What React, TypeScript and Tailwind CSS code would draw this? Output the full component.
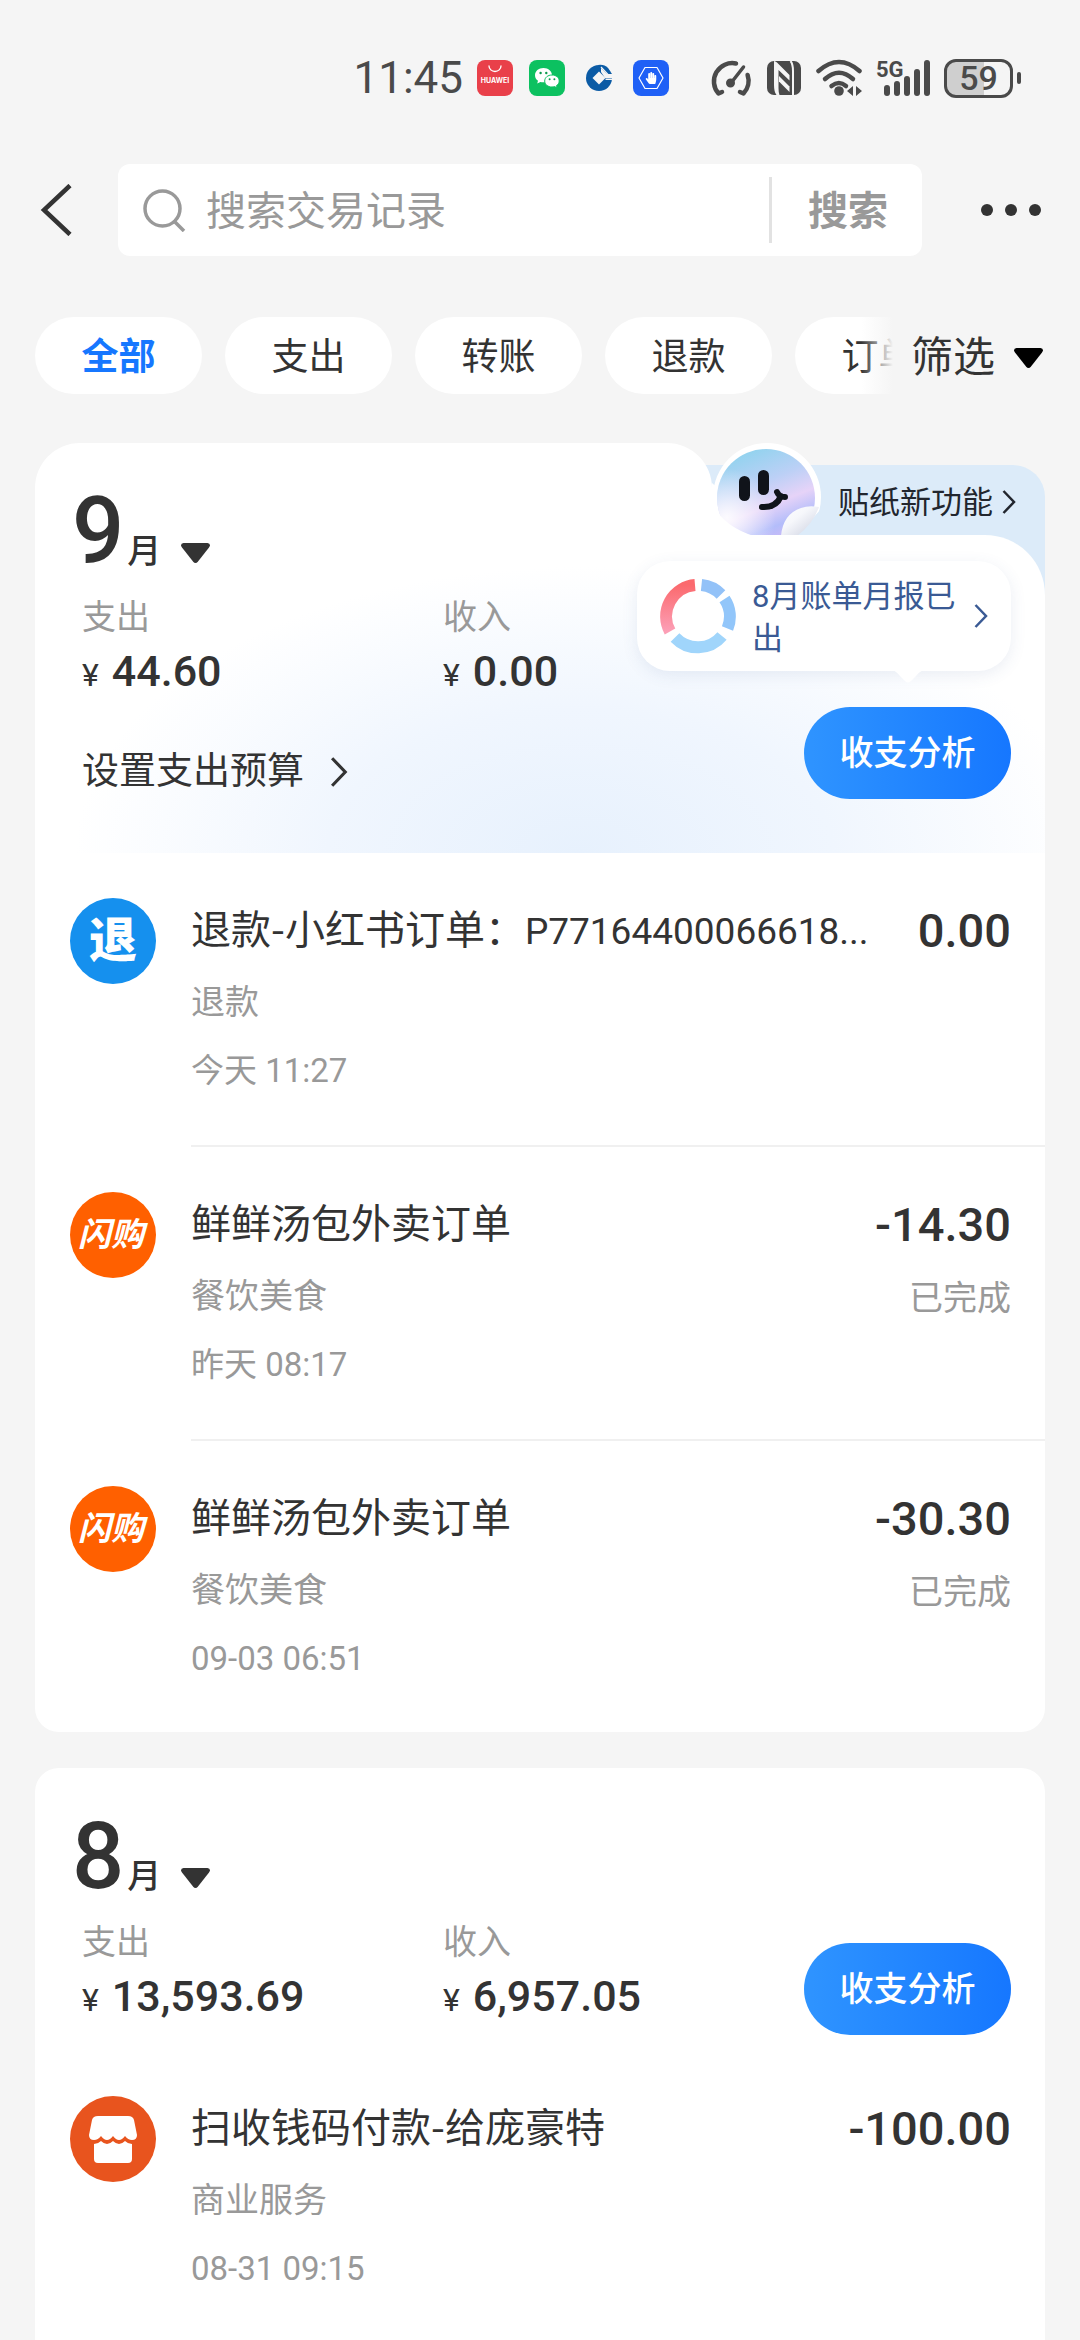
import React, { useState } from "react";
import { FaHandPaper } from "react-icons/fa";

type Transaction = {
  id: string;
  icon: "refund" | "flash" | "shop";
  title: string;
  code?: string;
  category: string;
  time: string;
  amount: string;
  status?: string;
};

const filters = ["全部", "支出", "转账", "退款", "订单"];

const september: Transaction[] = [
  {
    id: "s1",
    icon: "refund",
    title: "退款-小红书订单：",
    code: "P77164400066618...",
    category: "退款",
    time: "今天 11:27",
    amount: "0.00",
  },
  {
    id: "s2",
    icon: "flash",
    title: "鲜鲜汤包外卖订单",
    category: "餐饮美食",
    time: "昨天 08:17",
    amount: "-14.30",
    status: "已完成",
  },
  {
    id: "s3",
    icon: "flash",
    title: "鲜鲜汤包外卖订单",
    category: "餐饮美食",
    time: "09-03 06:51",
    amount: "-30.30",
    status: "已完成",
  },
];

const august: Transaction[] = [
  {
    id: "a1",
    icon: "shop",
    title: "扫收钱码付款-给庞豪特",
    category: "商业服务",
    time: "08-31 09:15",
    amount: "-100.00",
  },
];

const AppIcons = () => (
  <div className="flex gap-4">
    <svg className="size-9" viewBox="0 0 36 36">
      <rect width="36" height="36" rx="8" fill="#e9404a" />
      <path d="M12 6a6 5.500 0 0 0 12 0" fill="none" stroke="#fff" strokeWidth="1.300" strokeLinecap="round" />
      <text x="18" y="23" textAnchor="middle" fill="#fff" fontSize="7" fontWeight="700" fontFamily="Inter, sans-serif">
        HUAWEI
      </text>
    </svg>
    <svg className="size-9" viewBox="0 0 36 36">
      <rect width="36" height="36" rx="8" fill="#0cc160" />
      <path d="M14.500 8C9.500 8 6 11.200 6 15.200c0 2.300 1.200 4.200 3 5.500l-.8 2.800 3.200-1.600c1 .3 2 .4 3.100.4 5 0 8.500-3.200 8.500-7.100S19.500 8 14.500 8z" fill="#fff" />
      <path d="M23 15c-4.200 0-7.300 2.600-7.300 6s3.100 6 7.300 6c.9 0 1.800-.1 2.600-.4l2.600 1.400-.7-2.400c1.700-1.100 2.700-2.700 2.700-4.600 0-3.400-3-6-7.200-6z" fill="#fff" stroke="#0cc160" strokeWidth="1" />
      <g fill="#0a9a4c">
        <circle cx="11.600" cy="13" r="1.200" />
        <circle cx="17.300" cy="13" r="1.200" />
        <circle cx="20.600" cy="19.300" r="1" />
        <circle cx="25.400" cy="19.300" r="1" />
      </g>
    </svg>
    <svg className="size-9" viewBox="0 0 36 36">
      <circle cx="18" cy="18" r="13" fill="#0b5ba5" />
      <path d="M18 11.500l6.500 6.500-6.500 6.500-6.500-6.500z" fill="#f5f5f5" />
      <path d="M24 18h8v-4l-9-9-2-1 7 9h-3l-5-6v5z" fill="#f5f5f5" />
      <path d="M17 5q6-1 10 3l4 6h-5z" fill="#0b5ba5" />
      <path d="M20 7l7 7.500" stroke="#f5f5f5" strokeWidth="1.200" />
      <path d="M24.500 18.500h8l-1 1.500h-7z" fill="#f5f5f5" />
    </svg>
    <span className="relative grid size-9 place-items-center rounded-lg bg-[#1f60f6]">
      <svg className="absolute inset-0" viewBox="0 0 36 36">
        <path d="M12 7.500h12l6 10.500-6 10.500H12L6 18z" fill="none" stroke="#fff" strokeWidth="1.200" strokeLinejoin="round" />
      </svg>
      <FaHandPaper className="size-3 text-white" />
    </span>
  </div>
);

const StatusBar = () => (
  <div className="flex h-[106px] items-center justify-end gap-[14px] pt-[50px] pr-[59px] text-[#4a4a4a]">
    <span className="text-[44px] leading-[46px]">11:45</span>
    <AppIcons />
    <svg className="ml-[26px] h-10 w-[44px]" viewBox="0 0 44 40" fill="none" stroke="currentColor" strokeWidth="4.500" strokeLinecap="round">
      <path d="M27 5.500A18.300 18.300 0 0 0 9.500 35.500L13 34" strokeLinejoin="round" />
      <path d="M38.600 17A18.300 18.300 0 0 1 34.500 35.500L31 34" strokeLinejoin="round" />
      <path d="M22 25L34.500 9" strokeWidth="3.500" />
      <circle cx="21.500" cy="25" r="3" fill="currentColor" strokeWidth="3" />
    </svg>
    <svg className="h-[34px] w-[34px]" viewBox="0 0 34 34">
      <rect width="34" height="34" rx="7" fill="currentColor" />
      <path d="M7 0q1.500 0 3 1.500L22.500 14v5.500L11.500 9v18q0 5 1 7H9.500Q7 31 7 24z" fill="#f5f5f5" />
      <path d="M12 15l10.500 10.500V31L12 20.500z" fill="#f5f5f5" />
      <path d="M23.500 0q2.500 3 2.500 10v24" fill="none" stroke="#f5f5f5" strokeWidth="2" />
    </svg>
    <svg className="h-10 w-[47px]" viewBox="0 0 47 40" fill="none" stroke="currentColor" strokeWidth="4.500" strokeLinecap="round">
      <path d="M3.500 13Q24 -5 44.500 13" />
      <path d="M10 21Q24 8.500 38 21" />
      <path d="M16.500 28Q24 22 31 28" />
      <circle cx="24" cy="33" r="4.800" fill="currentColor" stroke="none" />
      <path d="M38 28v10l-6-5zM41 28v10l6-5z" fill="currentColor" stroke="none" />
    </svg>
    <svg className="h-10 w-[54px]" viewBox="0 0 54 40" fill="currentColor">
      <text x="0" y="19" fontSize="22" fontWeight="700" fontFamily="Roboto, sans-serif">
        5G
      </text>
      <rect x="8" y="27" width="6" height="11" rx="3" />
      <rect x="18" y="23" width="6" height="15" rx="3" />
      <rect x="28" y="18" width="6" height="20" rx="3" />
      <rect x="38" y="11" width="6" height="27" rx="3" />
      <rect x="48" y="2" width="6" height="36" rx="3" />
    </svg>
    <div className="flex items-center gap-1">
      <div className="flex h-[39px] w-[69px] items-center justify-center rounded-xl border-3 border-[#4a4a4a] bg-linear-to-r from-[#cfcfcf] from-59% to-[#f5f5f5] to-59% text-[34px] leading-none font-medium">
        59
      </div>
      <div className="h-3 w-1 rounded-full bg-[#4a4a4a]" />
    </div>
  </div>
);

const Header = () => (
  <header className="mt-[58px] flex items-center pr-[39px] pl-[40px]">
    <button aria-label="返回" className="mr-[46px]">
      <svg className="h-[52px] w-8" viewBox="0 0 32 52" fill="none" stroke="#333" strokeWidth="4.500">
        <path d="M30 1.500L4 26l26 24.500" />
      </svg>
    </button>
    <form className="flex h-[92px] min-w-0 flex-1 items-center rounded-xl bg-white pr-[34px] pl-[25px]">
      <svg className="mr-[20px] size-[43px] shrink-0" viewBox="0 0 43 43" fill="none" stroke="#999" strokeWidth="3.500">
        <circle cx="19.500" cy="19.500" r="17.500" />
        <path d="M32 33l9 9" />
      </svg>
      <input
        aria-label="搜索交易记录"
        placeholder="搜索交易记录"
        className="min-w-0 flex-1 bg-transparent pt-1 text-[40px] leading-[56px] outline-none placeholder:text-[#999]"
      />
      <div className="mr-[36px] h-[66px] w-[3px] bg-[#e2e2e2]" />
      <button type="button" className="pt-1 text-[40px] leading-[56px] font-bold text-[#999]">
        搜索
      </button>
    </form>
    <button aria-label="更多" className="ml-[59px] flex gap-3">
      <span className="size-3 rounded-full bg-[#333]" />
      <span className="size-3 rounded-full bg-[#333]" />
      <span className="size-3 rounded-full bg-[#333]" />
    </button>
  </header>
);

const Triangle = ({ className }: { className: string }) => (
  <svg className={className} viewBox="0 0 29 20">
    <path d="M2.500 0h24q4 1 1.500 4.500L17 18.500q-2.500 3-5 0L1 4.500Q-1.500 1 2.500 0z" fill="currentColor" />
  </svg>
);

const Chevron = ({ className }: { className: string }) => (
  <svg className={className} viewBox="0 0 14 24" fill="none" stroke="currentColor" strokeWidth="2.500">
    <path d="M1.500 1L12 12 1.500 23" />
  </svg>
);

const FilterBar = () => {
  const [active, setActive] = useState(filters[0]);

  return (
    <nav className="mt-[61px] flex items-center pr-[37px] pl-[35px]">
      <div className="relative flex min-w-0 flex-1 gap-[23px] overflow-hidden">
        {filters.map((text) => (
          <button
            key={text}
            onClick={() => setActive(text)}
            className={`h-[77px] w-[167px] shrink-0 rounded-full bg-white pt-1 text-[37px] leading-[48px] ${
              text === active ? "font-bold text-[#1677ff]" : "text-[#333]"
            }`}
          >
            {text}
          </button>
        ))}
        <div className="absolute inset-y-0 right-0 w-8 bg-linear-to-r from-[#f5f5f5]/0 to-[#f5f5f5]" />
      </div>
      <button className="ml-[18px] flex items-center gap-[19px] pt-1 text-[42px] leading-[56px] text-[#333]">
        筛选
        <Triangle className="h-5 w-[29px] text-black" />
      </button>
    </nav>
  );
};

const Sticker = () => (
  <svg className="absolute top-0 right-[224px] h-[93px] w-[109px]" viewBox="0 0 109 93">
    <defs>
      <linearGradient id="holo" x1="0.300" y1="0" x2="0.700" y2="1">
        <stop offset="0" stopColor="#8fd3ee" />
        <stop offset="0.350" stopColor="#bcd0f6" />
        <stop offset="0.580" stopColor="#e6d3f8" />
        <stop offset="0.780" stopColor="#b3bdfa" />
        <stop offset="1" stopColor="#d9b8f5" />
      </linearGradient>
      <radialGradient id="glow" cx="0.100" cy="0.700" r="0.500">
        <stop offset="0" stopColor="#fff" stopOpacity="0.900" />
        <stop offset="1" stopColor="#fff" stopOpacity="0" />
      </radialGradient>
      <linearGradient id="fold" x1="0" y1="0" x2="1" y2="1">
        <stop offset="0" stopColor="#fff" />
        <stop offset="0.400" stopColor="#f6f7fb" />
        <stop offset="1" stopColor="#c9cede" />
      </linearGradient>
    </defs>
    <path d="M0 40v53h60z" fill="#fff" />
    <circle cx="55" cy="54" r="54" fill="#fff" />
    <circle cx="54" cy="55" r="49" fill="url(#holo)" />
    <circle cx="54" cy="55" r="49" fill="url(#glow)" />
    <path d="M0 60q12 24 42 33H0z" fill="#fff" />
    <path d="M109 66q-14 16-26 27h26z" fill="#dcebf9" />
    <path d="M107 64q-10-2-18 1-18 6-20 28h16q16-12 22-29z" fill="url(#fold)" />
    <rect x="27" y="33" width="11" height="25" rx="5.500" fill="#10131a" />
    <rect x="46" y="27" width="11" height="25" rx="5.500" fill="#10131a" />
    <path d="M50 64q14 1 19-11M65 49q2 5 8 5" fill="none" stroke="#10131a" strokeWidth="6" strokeLinecap="round" />
  </svg>
);

// White tab on the left, blue banner peeking out from behind on the right
const StickerBanner = () => (
  <>
    <a
      href="#sticker"
      className="absolute top-[22px] right-0 flex h-[140px] w-[368px] items-start justify-end gap-[9px] rounded-tr-[32px] bg-[#dcebf9] pt-4 pr-[29px] text-[31px] leading-[44px] text-[#22262e]"
    >
      贴纸新功能
      <Chevron className="mt-[9px] h-6 w-[14px]" />
    </a>
    <div className="absolute top-0 right-[333px] left-0 h-[140px] rounded-t-[45px] bg-white" />
    <Sticker />
    <div className="absolute inset-x-0 top-[92px] bottom-0 rounded-tr-[60px] bg-white bg-[radial-gradient(ellipse_50%_90%_at_54%_100%,#e7f1fd_0%,#f0f6fe_50%,#ffffff_100%)]" />
  </>
);

const ReportBubble = () => (
  <a
    href="#report"
    className="absolute top-[118px] right-[34px] flex h-[110px] w-[374px] items-center rounded-[33px] bg-white pl-[23px] text-[#3a5a94] shadow-[0_4px_16px_rgba(60,90,150,0.1)]"
  >
    <svg className="mr-[16px] size-[76px]" viewBox="0 0 76 76" fill="none" strokeWidth="12">
      <defs>
        <linearGradient id="red" x1="0" y1="0" x2="0" y2="1">
          <stop offset="0" stopColor="#fb6a6e" />
          <stop offset="1" stopColor="#fc9fb6" />
        </linearGradient>
      </defs>
      <path d="M35 7A31.500 31.500 0 0 0 10 53.500" stroke="url(#red)" />
      <path d="M41.500 7A31.500 31.500 0 0 1 61 16.500" stroke="#93c2f8" />
      <path d="M64.500 21A31.500 31.500 0 0 1 67.500 50.500" stroke="#92c6fa" />
      <path d="M62 58A31.500 31.500 0 0 1 15 59.500" stroke="#a0d5fb" />
    </svg>
    <span className="w-[210px] pt-1 text-[31px] leading-[42px]">8月账单月报已出</span>
    <Chevron className="ml-3 h-6 w-[14px]" />
    <svg className="absolute top-[109px] right-[87px] h-[13px] w-8" viewBox="0 0 32 13">
      <path d="M0 0h32q-4 1-8 6l-5 5q-3 3-6 0L8 6Q4 1 0 0z" fill="#fff" />
    </svg>
  </a>
);

const MonthTitle = ({ month }: { month: string }) => (
  <button className="flex h-[92px] items-baseline pl-[37px] leading-[92px]">
    <span className="text-[92px] font-medium">{month}</span>
    <span className="ml-[3px] text-[34px] font-medium">月</span>
    <Triangle className="ml-5 h-5 w-[29px]" />
  </button>
);

const Stat = ({ label, value }: { label: string; value: string }) => (
  <div className="w-[361px]">
    <div className="text-[34px] leading-[40px] text-[#999]">{label}</div>
    <div className="mt-2 text-[43px] leading-[52px] font-medium">
      <span className="mr-[13px] text-[32px] leading-none font-normal">¥</span>
      {value}
    </div>
  </div>
);

const AnalysisButton = () => (
  <button className="h-[92px] w-[207px] shrink-0 rounded-full bg-linear-to-r from-[#2f94ff] to-[#1677ff] text-[34px] leading-[48px] font-medium text-white">
    收支分析
  </button>
);

const TransactionIcon = ({ icon }: { icon: Transaction["icon"] }) => {
  switch (icon) {
    case "refund":
      return (
        <span className="flex size-[86px] shrink-0 items-center justify-center rounded-full bg-[#1590ee] text-[48px] leading-[48px] font-black text-white">
          退
        </span>
      );
    case "flash":
      return (
        <span className="flex size-[86px] shrink-0 items-center justify-center rounded-full bg-[#ff6000] pr-1 text-[33px] leading-[40px] font-bold text-white italic">
          闪购
        </span>
      );
    case "shop":
      return (
        <svg className="size-[86px] shrink-0" viewBox="0 0 86 86">
          <circle cx="43" cy="43" r="43" fill="#e8541e" />
          <path
            d="M28 20h30q5 0 6 4l3 15q0 5-5 5-4 0-7-4-3 4-6 4t-6-4q-3 4-6 4t-6-4q-3 4-7 4-5 0-5-5l3-15q1-4 6-4z"
            fill="#fff"
          />
          <path d="M24 48q4 0 7-3 3 3 6 3t6-3q3 3 6 3t6-3q3 3 7 3v15q0 4-4 4H28q-4 0-4-4z" fill="#fff" />
        </svg>
      );
  }
};

const TransactionItem = ({
  icon,
  title,
  code,
  category,
  time,
  amount,
  status,
}: Transaction) => (
  <li className="group flex pl-[35px]">
    <div className="pt-[45px] pr-[35px]">
      <TransactionIcon icon={icon} />
    </div>
    <div className="flex h-[294px] min-w-0 flex-1 justify-between border-b-2 border-[#f0f0f0] pt-[50px] pr-[34px] group-last:h-[291px] group-last:border-b-0">
      <div className="whitespace-nowrap">
        <div className="font-['Noto_Sans_CJK_SC',sans-serif] text-[40px] leading-[48px]">
          {title}
          {code && <span className="font-[Roboto,sans-serif] text-[37px] leading-none">{code}</span>}
        </div>
        <div className="mt-[27px] text-[34px] leading-[48px] text-[#999]">{category}</div>
        <div className="mt-[21px] text-[33px] leading-[48px] text-[#999]">{time}</div>
      </div>
      <div className="text-right whitespace-nowrap">
        <div className="text-[47px] leading-[56px] font-medium">{amount}</div>
        {status && <div className="mt-[21px] text-[34px] leading-[48px] text-[#999]">{status}</div>}
      </div>
    </div>
  </li>
);

const TransactionList = ({ items }: { items: Transaction[] }) => (
  <ul>
    {items.map((item) => (
      <TransactionItem {...item} key={item.id} />
    ))}
  </ul>
);

const App = () => (
  <div className="flex h-screen flex-col overflow-hidden bg-[#f5f5f5] font-[Roboto,'Noto_Sans_CJK_SC',sans-serif] text-[#333]">
    <StatusBar />
    <Header />
    <FilterBar />
    <main className="mt-[49px] flex min-h-0 flex-1 flex-col gap-9 overflow-hidden px-[35px]">
      <section className="shrink-0">
        <div className="relative pt-[43px] pb-[54px]">
          <StickerBanner />
          <div className="relative">
            <MonthTitle month="9" />
            <div className="mt-[19px] flex pl-[47px]">
              <Stat label="支出" value="44.60" />
              <Stat label="收入" value="0.00" />
            </div>
            <div className="mt-[10px] flex items-end justify-between pr-[34px] pl-[47px]">
              <button className="mb-[3px] flex items-center gap-[26px] text-[37px] leading-[48px]">
                设置支出预算
                <Chevron className="h-[30px] w-[18px]" />
              </button>
              <AnalysisButton />
            </div>
          </div>
          <ReportBubble />
        </div>
        <div className="rounded-b-[24px] bg-white">
          <TransactionList items={september} />
        </div>
      </section>

      <section className="shrink-0 rounded-t-[24px] bg-white pt-[43px]">
        <MonthTitle month="8" />
        <div className="mt-[19px] flex items-start justify-between pr-[34px] pb-4 pl-[47px]">
          <div className="flex">
            <Stat label="支出" value="13,593.69" />
            <Stat label="收入" value="6,957.05" />
          </div>
          <div className="mt-[21px]">
            <AnalysisButton />
          </div>
        </div>
        <TransactionList items={august} />
      </section>
    </main>
  </div>
);

export default App;
